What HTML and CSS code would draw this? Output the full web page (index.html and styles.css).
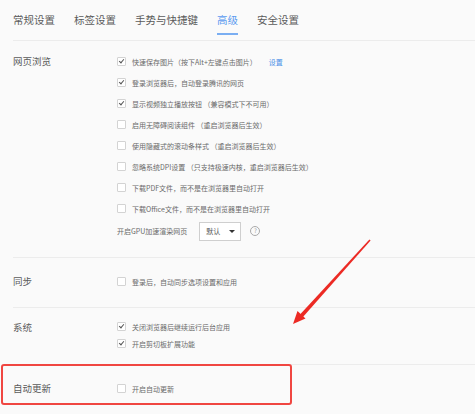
FILE: index.html
```
<!DOCTYPE html>
<html>
<head>
	<meta charset="utf-8">
	<title>高级设置</title>
	<link rel="stylesheet" href="styles.css">
</head>
<body>
<div class="page">
	<div class="tabs">
		<span>常规设置</span>
		<span>标签设置</span>
		<span>手势与快捷键</span>
		<span class="current">高级</span>
		<span>安全设置</span>
	</div>

	<div class="section web">
		<div class="label">网页浏览</div>
		<ul class="opts">
			<li><i class="cb on"></i>快速保存图片（按下Alt+左键点击图片）<a href="#" class="link">设置</a></li>
			<li><i class="cb on"></i>登录浏览器后，自动登录腾讯的网页</li>
			<li><i class="cb on"></i>显示视频独立播放按钮 （兼容模式下不可用）</li>
			<li><i class="cb"></i>启用无障碍阅读组件 （重启浏览器后生效）</li>
			<li><i class="cb"></i>使用隐藏式的滚动条样式 （重启浏览器后生效）</li>
			<li><i class="cb"></i>忽略系统DPI设置 （只支持极速内核，重启浏览器后生效）</li>
			<li><i class="cb"></i>下载PDF文件，而不是在浏览器里自动打开</li>
			<li><i class="cb"></i>下载Office文件，而不是在浏览器里自动打开</li>
			<li class="gpu">开启GPU加速渲染网页
				<span class="select">默认<b></b></span>
				<span class="help">?</span>
			</li>
		</ul>
	</div>

	<div class="section sync">
		<div class="label">同步</div>
		<ul class="opts">
			<li><i class="cb"></i>登录后，自动同步选项设置和应用</li>
		</ul>
	</div>

	<div class="section system">
		<div class="label">系统</div>
		<ul class="opts">
			<li><i class="cb on"></i>关闭浏览器后继续运行后台应用</li>
			<li><i class="cb on"></i>开启剪切板扩展功能</li>
		</ul>
	</div>

	<div class="section update">
		<div class="label">自动更新</div>
		<ul class="opts">
			<li><i class="cb"></i>开启自动更新</li>
		</ul>
	</div>

	<!-- 标注 -->
	<div class="mark"></div>
	<svg class="arrow" width="475" height="414" viewBox="0 0 475 414">
		<polygon points="370.6,240.4 369.4,239.6 298.4,316.2 301.4,318.8" fill="#ec2a24"/>
		<polygon points="293,324 305.5,318.5 297.5,311" fill="#ec2a24"/>
	</svg>
</div>
</body>
</html>
```

FILE: styles.css
```
* {
	margin: 0;
	padding: 0;
	box-sizing: border-box;
}
html, body {
	background: #fafafa;
}
body {
	font-family: "Noto Sans CJK SC", "Liberation Sans", sans-serif;
	color: #555;
}
.page {
	position: relative;
	width: 475px;
	height: 414px;
	overflow: hidden;
}
.tabs {
	display: flex;
	gap: 19px;
	margin-left: 13px;
	height: 41px;
	border-bottom: 1px solid #ececec;
}
.tabs span {
	font-size: 10.5px;
	line-height: 14px;
	padding: 13px 0 6px;
	height: 35px;
	border-bottom: 2px solid transparent;
	color: #5a5a5a;
}
.tabs span.current {
	color: #5c9bf0;
	border-bottom-color: #7aaef2;
}
.section {
	display: flex;
	margin-left: 13px;
	border-bottom: 1px solid #ececec;
}
.label {
	width: 104px;
	font-size: 9.5px;
	line-height: 21px;
	color: #5a5a5a;
}
.opts {
	list-style: none;
	flex: 1;
}
.opts li {
	display: flex;
	align-items: center;
	height: 21px;
	font-size: 7px;
	color: #6a6a6a;
	white-space: nowrap;
}
.cb {
	display: inline-block;
	position: relative;
	width: 9px;
	height: 9px;
	margin-right: 6px;
	border: 1px solid #d3d3d3;
	border-radius: 1px;
	background: #fff;
}
.cb.on::after {
	content: "";
	position: absolute;
	left: 2px;
	top: 0px;
	width: 2px;
	height: 4px;
	border-right: 1.2px solid #555;
	border-bottom: 1.2px solid #555;
	transform: rotate(40deg);
}
.link {
	color: #4a8fe7;
	text-decoration: none;
	margin-left: 12px;
}
.web {
	padding: 10px 0 15px;
}
.opts li.gpu {
	height: 22px;
	margin-top: 1px;
}
.select {
	display: inline-flex;
	align-items: center;
	justify-content: space-between;
	width: 42px;
	height: 19px;
	margin-left: 12px;
	padding: 0 5px 0 6px;
	border: 1px solid #cfcfcf;
	background: #fff;
	color: #555;
}
.select b {
	width: 0;
	height: 0;
	border-left: 3px solid transparent;
	border-right: 3px solid transparent;
	border-top: 3px solid #333;
}
.help {
	display: inline-block;
	width: 10px;
	height: 10px;
	margin-left: 9px;
	border: 1px solid #aaa;
	border-radius: 50%;
	font-size: 6px;
	line-height: 8px;
	text-align: center;
	color: #999;
}
.sync {
	padding: 13px 0 15px;
}
.system {
	padding: 10px 0 12px;
}
.system .label {
	line-height: 21px;
	margin-top: -1px;
}
.system .opts li {
	height: 17px;
}
.update {
	padding: 13px 0 20px;
	border-bottom: none;
}
.mark {
	position: absolute;
	left: 1px;
	top: 364px;
	width: 291px;
	height: 41px;
	border: 2px solid #f04641;
	border-radius: 3px;
}
.arrow {
	position: absolute;
	left: 0;
	top: 0;
}
```
